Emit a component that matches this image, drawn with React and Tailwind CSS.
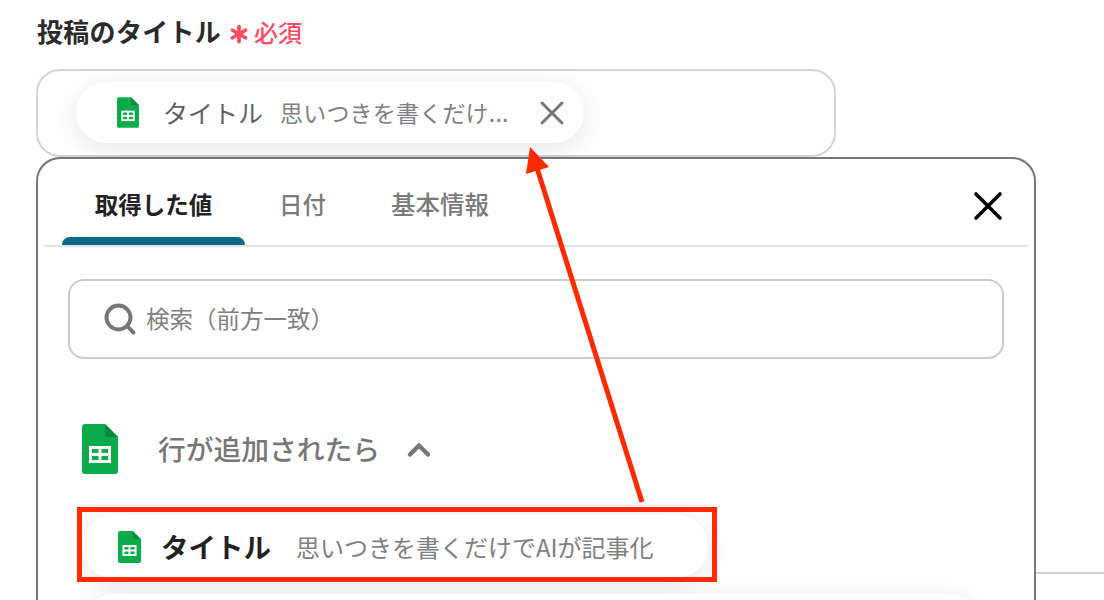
import { X, Search, ChevronUp, Asterisk } from 'lucide-react'

const font = "font-['Noto_Sans_CJK_JP','Noto_Sans',sans-serif]"

function SheetIcon({ className }) {
  return (
    <svg viewBox="0 0 36 50" className={className}>
      <path d="M3 0H23L36 13V47a3 3 0 0 1-3 3H3a3 3 0 0 1-3-3V3a3 3 0 0 1 3-3Z" fill="#0BAA4B" />
      <path d="M23 0L36 13H26a3 3 0 0 1-3-3Z" fill="#0A8A3C" />
      <path d="M7 22H29V39H7Z" fill="#fff" />
      <path d="M10 25H16.5V29H10ZM19.5 25H26V29H19.5ZM10 32H16.5V36H10ZM19.5 32H26V36H19.5Z" fill="#0BAA4B" />
    </svg>
  )
}

function Arrow() {
  return (
    <svg className="absolute inset-0 pointer-events-none" width="1104" height="600">
      <line x1="642" y1="502" x2="537" y2="168" stroke="#FF2A00" strokeWidth="5" />
      <path d="M530 147L549 167L526 174Z" fill="#FF2A00" />
    </svg>
  )
}

export default function App() {
  return (
    <div className={`${font} relative w-[1104px] h-[600px] overflow-hidden bg-white`}>
      {/* line of the page behind the panel */}
      <div className="absolute right-0 top-[572px] w-[70px] h-[2px] bg-[#ccd2d8]"></div>

      <div className="pl-9 pt-[13px]">
        {/* Label */}
        <div className="flex items-center h-9 pl-px">
          <span className="text-[26px] tracking-[0.3px] leading-9 font-bold text-[#2b2b2b] whitespace-nowrap">投稿のタイトル</span>
          <Asterisk className="ml-[3px] mt-[6px] w-[30px] h-[30px] text-[#ff4b63]" strokeWidth={3} />
          <span className="mt-px text-[24px] leading-9 font-medium text-[#ff4b63] whitespace-nowrap">必須</span>
        </div>

        {/* Input with the chip */}
        <div className="mt-[20px] w-[800px] h-[88px] border-2 border-[#d0d5dd] rounded-[24px] pl-[38px] pt-[11px]">
          <div className="w-[508px] h-[61px] rounded-full bg-white shadow-[0_6px_28px_rgba(0,0,0,0.10)] flex items-center pl-[41px]">
            <SheetIcon className="w-[22px] h-[31px]" />
            <span className="ml-[24px] text-[25px] text-[#5c6166] whitespace-nowrap">タイトル</span>
            <span className="ml-[17px] text-[23px] tracking-[0.2px] text-[#808080] whitespace-nowrap">思いつきを書くだけ...</span>
            <X className="ml-[23px] w-[40px] h-[40px] text-[#777777]" strokeWidth={1.8} />
          </div>
        </div>

        {/* Value picker */}
        <div className="w-[1000px] h-[500px] border-2 border-b-0 border-[#777777] rounded-t-[24px] bg-white relative px-[6px]">
          <div className="flex items-start h-[88px] border-b-2 border-[#e3e3e3]">
            <div className="relative w-[183px] ml-[18px] h-[86px] text-center">
              <span className="leading-[90px] text-[23.5px] font-bold text-[#222222] whitespace-nowrap">取得した値</span>
              <div className="absolute left-0 right-0 bottom-0 h-2 rounded-t-lg bg-[#0a6a85]"></div>
            </div>
            <span className="ml-[34px] leading-[90px] text-[23.5px] font-medium text-[#7a7a7a]">日付</span>
            <span className="ml-[65px] leading-[90px] text-[24.5px] font-medium text-[#7a7a7a]">基本情報</span>
            <X className="ml-auto mr-[16px] mt-[23px] w-[48px] h-[48px] text-black" strokeWidth={1.8} />
          </div>

          <div className="mt-[32px] ml-6 w-[936px] h-[80px] border-2 border-[#cccccc] rounded-2xl flex items-center pl-[32px]">
            <Search className="w-9 h-9 text-[#777777]" strokeWidth={2.6} />
            <span className="ml-[8px] text-[23.5px] text-[#808080] whitespace-nowrap">検索（前方一致）</span>
          </div>

          <div className="mt-[65px] ml-[38px] flex items-center h-[50px]">
            <SheetIcon className="w-[36px] h-[50px]" />
            <span className="ml-[40px] text-[27.75px] font-medium text-[#777777] whitespace-nowrap">行が追加されたら</span>
            <ChevronUp className="ml-[21px] mt-[2px] w-[36px] h-[36px] text-[#777777]" strokeWidth={3} />
          </div>

          <div className="mt-[41px] ml-[38px] w-[626px] h-[63px] rounded-full bg-white shadow-[0_6px_28px_rgba(0,0,0,0.10)] flex items-center pl-[36px]">
            <SheetIcon className="w-[23px] h-[32px]" />
            <span className="ml-[20px] text-[27.5px] font-bold text-[#222222] whitespace-nowrap">タイトル</span>
            <span className="ml-[25px] text-[24px] text-[#808080] whitespace-nowrap">思いつきを書くだけでAIが記事化</span>
          </div>

          <div className="mt-[16px] ml-[38px] w-[900px] h-[63px] rounded-[32px] bg-white shadow-[0_6px_28px_rgba(0,0,0,0.10)]"></div>
        </div>
      </div>

      {/* Annotations on top of the screenshot */}
      <div className="absolute left-[77px] top-[507px] w-[640px] h-[75px] border-[5px] border-[#ff2a00]"></div>
      <Arrow />
    </div>
  )
}
